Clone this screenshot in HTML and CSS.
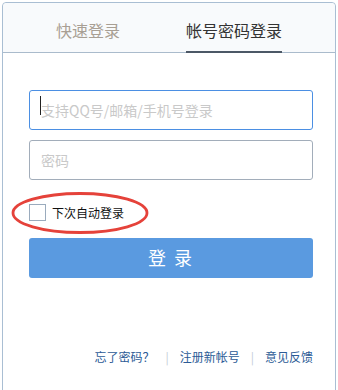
FILE: index.html
```html
<!DOCTYPE html>
<html lang="zh">
<head>
<meta charset="utf-8">
<link rel="stylesheet" href="styles.css">
</head>
<body>
<div class="panel">
  <div class="tabs">
    <div class="tab">快速登录</div>
    <div class="tab active">帐号密码登录</div>
  </div>
  <div class="form">
    <div class="field focus">
      <span class="caret"></span>
      <input class="input" type="text" placeholder="支持QQ号/邮箱/手机号登录">
    </div>
    <div class="field">
      <input class="input" type="password" placeholder="密码">
    </div>
    <div class="remember">
      <span class="box"></span>
      <span class="label">下次自动登录</span>
      <svg class="ring" width="140" height="44" viewBox="0 0 140 44">
        <ellipse cx="69" cy="21" rx="67" ry="19.5" fill="none" stroke="#e5423a" stroke-width="2.8"/>
      </svg>
    </div>
    <button class="submit">登 录</button>
  </div>
  <div class="links">
    <a class="link">忘了密码？</a>
    <span class="sep">|</span>
    <a class="link">注册新帐号</a>
    <span class="sep">|</span>
    <a class="link">意见反馈</a>
  </div>
</div>
</body>
</html>
```

FILE: styles.css
```css
* { box-sizing: border-box; }
html, body { margin: 0; padding: 0; background: #fff; }
body {
  font-family: "Noto Sans CJK SC", "Liberation Sans", sans-serif;
  width: 338px;
  height: 390px;
  overflow: hidden;
}
.panel {
  margin: 2px 0 0 2px;
  width: 334px;
  height: 400px;
  border: 1px solid #a9bed3;
  border-radius: 4px 4px 0 0;
  background: #fff;
}
.tabs {
  display: flex;
  height: 50px;
  background: #f8fafc;
  border-bottom: 1px solid #aabbcc;
  border-radius: 4px 4px 0 0;
  padding-left: 53px;
  gap: 66px;
}
.tab {
  font-size: 16px;
  line-height: 20px;
  padding-top: 17px;
  color: #a89f94;
  height: 50px;
  white-space: nowrap;
}
.tab.active {
  color: #333;
  border-bottom: 2px solid #4c5866;
  width: 96px;
}
.form {
  padding: 37px 0 0 26px;
}
.field {
  position: relative;
  width: 284px;
  height: 40px;
  border: 1px solid #a2adba;
  border-radius: 3px;
  margin-bottom: 10px;
}
.field.focus { border-color: #4b8fe3; }
.caret {
  position: absolute;
  left: 10px;
  top: 5px;
  width: 1px;
  height: 19px;
  background: #222;
}
.input {
  display: block;
  width: 100%;
  height: 100%;
  border: 0;
  outline: 0;
  background: transparent;
  padding: 0 0 0 11px;
  font-family: "Noto Sans CJK SC", "Liberation Sans", sans-serif;
  font-size: 14px;
  color: #333;
}
.input::placeholder { color: #c9c9c9; }
.remember {
  position: relative;
  display: flex;
  align-items: center;
  gap: 6px;
  margin-top: 24px;
  height: 17px;
}
.box {
  width: 17px;
  height: 17px;
  border: 1px solid #9aabbd;
  background: #fff;
}
.label {
  font-size: 12px;
  color: #111;
  line-height: 17px;
}
.ring {
  position: absolute;
  left: -18px;
  top: -12px;
}
.submit {
  display: block;
  margin-top: 17px;
  width: 284px;
  height: 40px;
  border: 0;
  border-radius: 3px;
  background: #5a9ae0;
  color: #fff;
  font-family: "Noto Sans CJK SC", "Liberation Sans", sans-serif;
  font-size: 18px;
  letter-spacing: 2px;
  padding: 0 0 2px 0;
}
.links {
  display: flex;
  justify-content: flex-end;
  align-items: center;
  gap: 11px;
  margin-top: 71px;
  padding-right: 22px;
  font-size: 12px;
  line-height: 16px;
}
.link { color: #2c5b96; }
.sep { color: #c4ccd6; }
```
